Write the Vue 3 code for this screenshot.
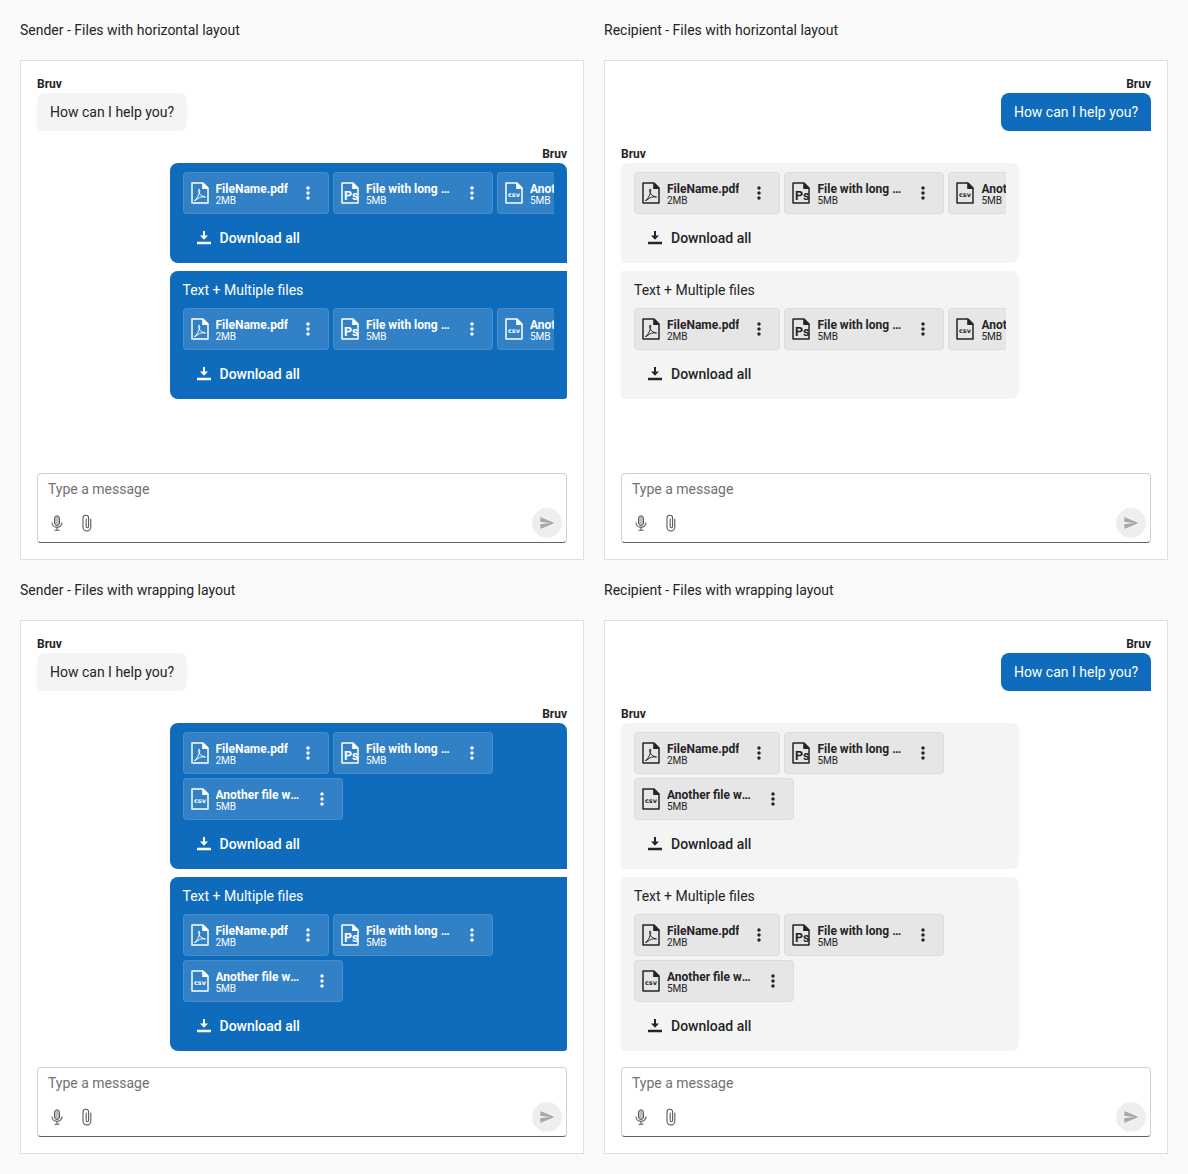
<script setup>
const panels = [
  { title: 'Sender - Files with horizontal layout', own: 'files', wrap: false },
  { title: 'Recipient - Files with horizontal layout', own: 'text', wrap: false },
  { title: 'Sender - Files with wrapping layout', own: 'files', wrap: true },
  { title: 'Recipient - Files with wrapping layout', own: 'text', wrap: true }
]
const files = [
  { name: 'FileName.pdf', size: '2MB', type: 'pdf' },
  { name: 'File with long name.psd', size: '5MB', type: 'psd' },
  { name: 'Another file with long name.csv', size: '5MB', type: 'csv' }
]
</script>

<template>
  <div class="page">
    <section v-for="p in panels" :key="p.title" class="col">
      <h2 class="title">{{ p.title }}</h2>
      <div class="panel">
        <div class="messages">
          <div class="group" :class="p.own === 'text' ? 'right' : 'left'">
            <div class="name">Bruv</div>
            <div class="bubble plain" :class="p.own === 'text' ? 'blue corner-br' : 'grey corner-bl'">How can I help you?</div>
          </div>
          <div class="group" :class="p.own === 'files' ? 'right' : 'left'">
            <div class="name">Bruv</div>
            <div
              v-for="n in 2"
              :key="n"
              class="bubble rich"
              :class="[p.own === 'files' ? 'blue' : 'grey', (p.own === 'files' ? 'r' : 'l') + n]"
            >
              <div v-if="n === 2" class="caption">Text + Multiple files</div>
              <div class="files" :class="{ wrap: p.wrap }">
                <div v-for="f in files" :key="f.type" class="chip">
                  <svg class="ficon" viewBox="0 0 18 22" width="18" height="22">
                    <path d="M1 1h11l5 5v15H1z" fill="none" stroke="currentColor" stroke-width="1.5" stroke-linejoin="round" />
                    <path d="M11.2 1h1.2l4.8 4.8v1.2h-6z" fill="currentColor" />
                    <path
                      v-if="f.type === 'pdf'"
                      d="M3.5 18.500c2-1 4-4.500 5-8 .4-1.400.2-3.500-.4-3.500s-.7 2-.1 3.500c.9 2.200 2.800 4 6.500 4.500-3-.6-6.500 0-10 3.500z"
                      fill="none"
                      stroke="currentColor"
                      stroke-width="1"
                    />
                    <text v-else-if="f.type === 'psd'" x="3" y="17.500" class="ps">Ps</text>
                    <text v-else x="9" y="15" class="csv">csv</text>
                  </svg>
                  <div class="meta">
                    <div class="fname">{{ f.name }}</div>
                    <div class="fsize">{{ f.size }}</div>
                  </div>
                  <svg class="more" viewBox="0 0 24 24" width="20" height="20">
                    <path fill="currentColor" d="M12 8c1.100 0 2-.9 2-2s-.9-2-2-2-2 .9-2 2 .9 2 2 2zm0 2c-1.100 0-2 .9-2 2s.9 2 2 2 2-.9 2-2-.9-2-2-2zm0 6c-1.100 0-2 .9-2 2s.9 2 2 2 2-.9 2-2-.9-2-2-2z" />
                  </svg>
                </div>
              </div>
              <div class="download">
                <svg viewBox="0 0 14 14" width="14" height="14">
                  <path fill="currentColor" d="M6 0h2v4.500h3L7 8.800 3 4.500h3zM0 10.700h14v2.600H0z" />
                </svg>
                <span>Download all</span>
              </div>
            </div>
          </div>
        </div>
        <div class="composer">
          <div class="placeholder">Type a message</div>
          <div class="actions">
            <span class="act">
              <svg viewBox="0 0 18 18" width="18" height="18" fill="none" stroke="currentColor" stroke-width="1">
                <rect x="6.500" y="1.800" width="5" height="9.700" rx="2.500" fill="#bdbdbd" />
                <path d="M4 8.500c0 6.500 10 6.500 10 0M9 13.500V16M6.500 16.300h5" stroke-width="1.100" />
              </svg>
            </span>
            <span class="act">
              <svg viewBox="0 0 18 18" width="18" height="18" fill="none" stroke="currentColor" stroke-width="1.100" stroke-linecap="round">
                <path d="M12.800 5v8a3.900 3.900 0 0 1-7.800 0V4a2.800 2.800 0 0 1 5.600 0v8.500a1.200 1.200 0 0 1-2.400 0V5" />
              </svg>
            </span>
            <span class="send">
              <svg viewBox="0 0 24 24" width="16" height="16">
                <path fill="currentColor" d="M2.010 21 23 12 2.010 3 2 10l15 2-15 2z" />
              </svg>
            </span>
          </div>
        </div>
      </div>
    </section>
  </div>
</template>

<style>
html, body { background: #fafafa; }
</style>

<style scoped>
.page {
  display: grid;
  grid-template-columns: 564px 564px;
  column-gap: 20px;
  padding: 0 20px 20px;
  font-family: Roboto, "Liberation Sans", sans-serif;
  color: #242424;
  background: #fafafa;
}
.title {
  height: 60px;
  margin: 0;
  display: flex;
  align-items: center;
  font-size: 14px;
  font-weight: 400;
  color: #242424;
}
.panel {
  box-sizing: border-box;
  min-height: 500px;
  display: flex;
  flex-direction: column;
  padding: 16px;
  background: #fff;
  border: 1px solid #e0e0e0;
}
.messages {
  flex: 1;
  display: flex;
  flex-direction: column;
  gap: 16px;
  margin-bottom: 16px;
}
.group { display: flex; flex-direction: column; }
.group.right { align-items: flex-end; }
.group.left { align-items: flex-start; }
.name {
  font-size: 12px;
  font-weight: 700;
  line-height: 14px;
  padding-bottom: 2px;
  color: #242424;
}
.bubble {
  box-sizing: border-box;
  font-size: 14px;
  line-height: 20px;
  border-radius: 8px;
}
.plain { padding: 9px 13px; }
.blue { background: #0f6cbd; color: #fff; }
.grey { background: #f4f4f4; color: #242424; }
.corner-bl { border-bottom-left-radius: 0; }
.corner-br { border-bottom-right-radius: 0; }
.rich {
  width: 75%;
  padding: 9px 13px 5px;
}
.rich + .rich { margin-top: 8px; }
.r1 { border-bottom-right-radius: 0; }
.r2 { border-top-right-radius: 0; border-bottom-right-radius: 3px; }
.l1 { border-bottom-left-radius: 0; }
.l2 { border-top-left-radius: 0; border-bottom-left-radius: 3px; }
.caption { margin-bottom: 8px; }
.files {
  display: flex;
  gap: 4px;
  overflow: hidden;
}
.files.wrap { flex-wrap: wrap; }
.chip {
  box-sizing: border-box;
  flex: none;
  height: 42px;
  display: flex;
  align-items: center;
  padding-left: 7px;
  border-radius: 4px;
}
.blue .chip {
  background: rgba(255, 255, 255, 0.15);
  border: 1px solid rgba(255, 255, 255, 0.1);
}
.grey .chip {
  background: #e6e6e6;
  border: 1px solid #dcdcdc;
}
.ficon { flex: none; margin-right: 7px; }
.ps {
  font-family: Roboto, "Liberation Sans", sans-serif;
  font-size: 12.500px;
  font-weight: 700;
  fill: currentColor;
}
.csv {
  font-family: "DejaVu Sans", sans-serif;
  font-size: 6.500px;
  font-weight: 700;
  text-anchor: middle;
  fill: currentColor;
}
.meta { min-width: 0; padding-top: 2px; }
.fname {
  max-width: 86px;
  font-size: 12px;
  font-weight: 700;
  line-height: 14px;
  white-space: nowrap;
  overflow: hidden;
  text-overflow: ellipsis;
}
.fsize {
  font-size: 10px;
  line-height: 10px;
}
.more { flex: none; margin: 0 10px; }
.download {
  height: 40px;
  margin-top: 4px;
  padding-left: 14px;
  display: flex;
  align-items: center;
  gap: 9px;
  font-weight: 500;
}
.composer {
  box-sizing: border-box;
  height: 70px;
  padding-top: 7px;
  border: 1px solid #d1d1d1;
  border-bottom-color: #616161;
  border-radius: 4px;
}
.placeholder {
  padding-left: 10px;
  font-size: 14px;
  line-height: 17px;
  color: #707070;
}
.actions {
  display: flex;
  align-items: center;
  height: 30px;
  margin-top: 10px;
  padding: 0 4px;
}
.act {
  width: 30px;
  height: 30px;
  display: flex;
  align-items: center;
  justify-content: center;
  color: #5a5a5a;
}
.send {
  width: 30px;
  height: 30px;
  margin-left: auto;
  border-radius: 50%;
  background: #eeeeee;
  color: #a8a8a8;
  display: flex;
  align-items: center;
  justify-content: center;
}
</style>
